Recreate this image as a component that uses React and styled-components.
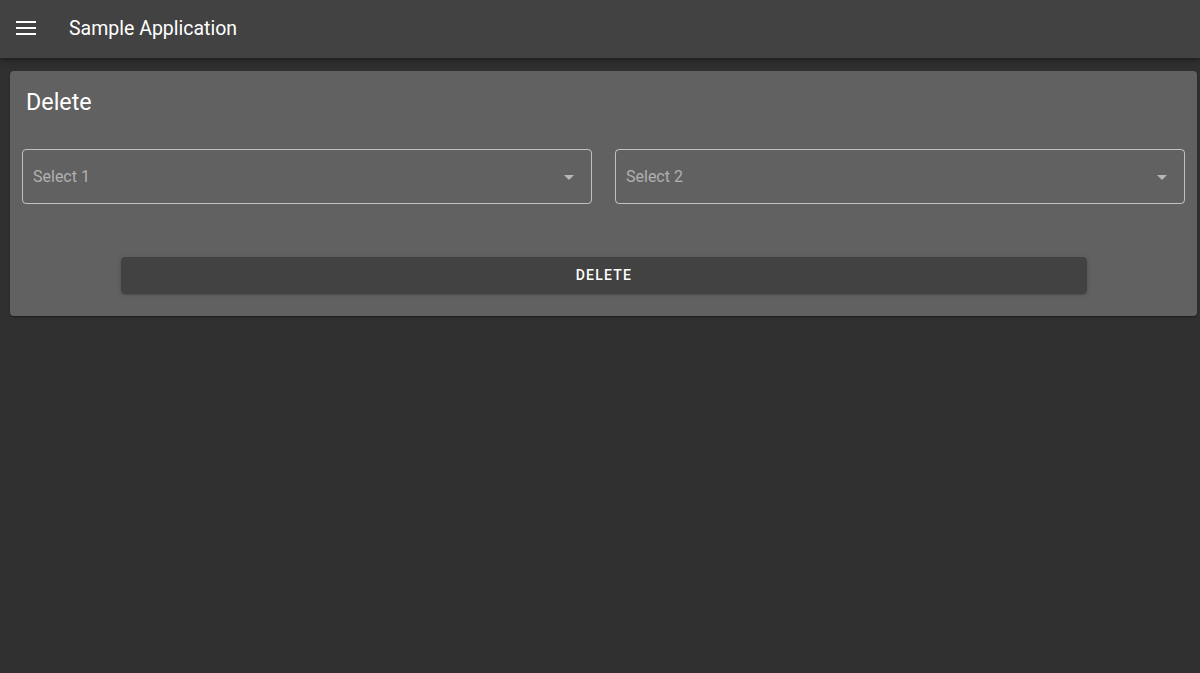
import styled, { createGlobalStyle } from "styled-components";

const Global = createGlobalStyle`
  html, body {
    margin: 0;
    padding: 0;
    background: #303030;
    font-family: Roboto, "Liberation Sans", sans-serif;
    color: #fff;
  }
  #root {
    min-height: 673px;
  }
`;

const AppBar = styled.header`
  height: 58px;
  box-sizing: border-box;
  background: #424242;
  display: flex;
  align-items: center;
  padding: 0 16px 2px;
  box-shadow: 0 2px 4px -1px rgba(0, 0, 0, 0.2), 0 4px 5px 0 rgba(0, 0, 0, 0.14),
    0 1px 10px 0 rgba(0, 0, 0, 0.12);
  position: relative;
  z-index: 1;

  .menu__icon {
    display: flex;
    width: 20px;
    margin-right: 33px;
  }

  .app__title {
    font-size: 19.5px;
    font-weight: 400;
  }
`;

const Card = styled.section`
  margin: 13px 3px 0 10px;
  background: #616161;
  border-radius: 4px;
  padding: 15px 12px 23px;
  box-shadow: 0 2px 1px -1px rgba(0, 0, 0, 0.2), 0 1px 1px 0 rgba(0, 0, 0, 0.14),
    0 1px 3px 0 rgba(0, 0, 0, 0.12);

  .card__title {
    margin: 0 0 0 4px;
    font-size: 23.3px;
    font-weight: 400;
    line-height: 32px;
  }
`;

const SelectRow = styled.div`
  display: grid;
  grid-template-columns: 1fr 1fr;
  gap: 23px;
  margin-top: 31px;
`;

const Select = styled.div`
  height: 53px;
  border: 1px solid rgba(255, 255, 255, 0.6);
  border-radius: 4px;
  display: flex;
  align-items: center;
  justify-content: space-between;
  padding: 0 17px 0 10px;
  color: rgba(255, 255, 255, 0.5);
  font-size: 16px;

  .select__arrow {
    width: 0;
    height: 0;
    border-left: 5px solid transparent;
    border-right: 5px solid transparent;
    border-top: 5px solid rgba(255, 255, 255, 0.55);
    margin-top: 2px;
  }
`;

const ButtonRow = styled.div`
  padding: 53px 98px 0 99px;
`;

const DeleteButton = styled.button`
  width: 100%;
  height: 36px;
  border: none;
  border-radius: 4px;
  background: #424242;
  color: #fff;
  font-family: Roboto, "Liberation Sans", sans-serif;
  font-size: 14px;
  font-weight: 500;
  letter-spacing: 1.25px;
  text-transform: uppercase;
  box-shadow: 0 3px 1px -2px rgba(0, 0, 0, 0.2), 0 2px 2px 0 rgba(0, 0, 0, 0.14),
    0 1px 5px 0 rgba(0, 0, 0, 0.12);
  cursor: pointer;
`;

const MenuIcon = () => (
  <svg width="20" height="14" viewBox="0 0 20 14" fill="#fff">
    <rect x="0" y="0" width="20" height="2" />
    <rect x="0" y="6" width="20" height="2" />
    <rect x="0" y="12" width="20" height="2" />
  </svg>
);

const App = () => {
  return (
    <>
      <Global />
      <AppBar>
        <span className="menu__icon">
          <MenuIcon />
        </span>
        <span className="app__title">Sample Application</span>
      </AppBar>
      <Card>
        <h2 className="card__title">Delete</h2>
        <SelectRow>
          <Select>
            <span>Select 1</span>
            <span className="select__arrow" />
          </Select>
          <Select>
            <span>Select 2</span>
            <span className="select__arrow" />
          </Select>
        </SelectRow>
        <ButtonRow>
          <DeleteButton>Delete</DeleteButton>
        </ButtonRow>
      </Card>
    </>
  );
};

export default App;
